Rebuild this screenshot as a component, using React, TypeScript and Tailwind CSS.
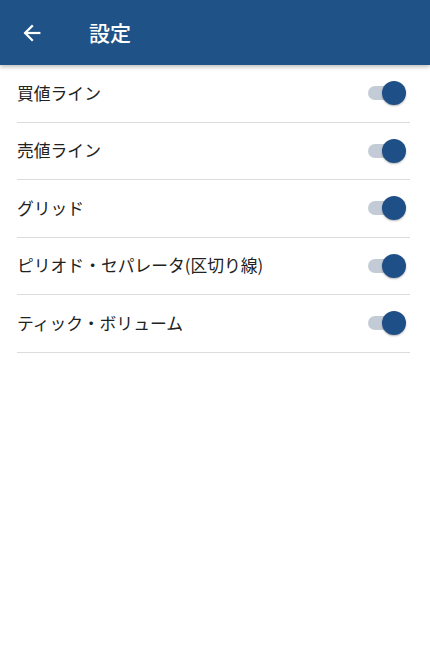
import React, { useState } from 'react';

const items = [
  '買値ライン',
  '売値ライン',
  'グリッド',
  'ピリオド・セパレータ(区切り線)',
  'ティック・ボリューム',
];

function Toggle({ on, onClick }: { on: boolean; onClick: () => void }) {
  return (
    <button type="button" onClick={onClick} className="relative w-[40px] h-[26px] mr-[4px] flex items-center">
      <span className="absolute left-[2px] w-[34px] h-[14px] rounded-full bg-[#c3ccd6]" />
      <span
        className={
          on
            ? 'absolute right-0 w-[24px] h-[24px] rounded-full bg-[#1e4f86] shadow-[0_1px_2px_rgba(0,0,0,0.3)]'
            : 'absolute left-0 w-[24px] h-[24px] rounded-full bg-[#f1f1f1] shadow-[0_1px_2px_rgba(0,0,0,0.3)]'
        }
      />
    </button>
  );
}

export default function App() {
  const [state, setState] = useState(items.map(() => true));

  return (
    <div
      className="w-[430px] h-[672px] bg-white"
      style={{ fontFamily: '"Noto Sans CJK JP", "Noto Sans", sans-serif' }}
    >
      {/* Header */}
      <div className="h-[65px] bg-[#1f5287] flex items-center shadow-[0_2px_4px_rgba(0,0,0,0.25)] relative z-10">
        <svg width="22" height="22" viewBox="0 0 24 24" className="ml-[21px]" fill="none" stroke="white" strokeWidth="2.4" strokeLinecap="square">
          <path d="M20 12H5" />
          <path d="M12 4.5L4.5 12L12 19.5" />
        </svg>
        <span className="ml-[46px] text-white text-[21px] font-medium">設定</span>
      </div>

      {/* List */}
      <div className="pl-[17px] pr-[20px]">
        {items.map((label, i) => (
          <div key={i} className="h-[57.5px] flex items-center justify-between border-b border-[#dcdcdc]">
            <span className="text-[16.8px] text-[#222]">{label}</span>
            <Toggle
              on={state[i]}
              onClick={() => setState(state.map((v, j) => (j === i ? !v : v)))}
            />
          </div>
        ))}
      </div>
    </div>
  );
}
